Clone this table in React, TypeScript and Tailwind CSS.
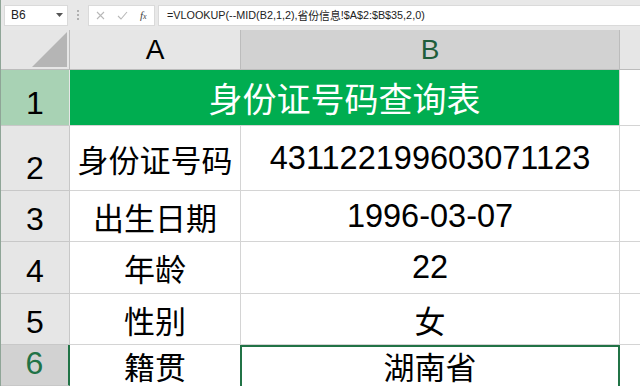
import React from "react";

const cjk = { fontFamily: '"Noto Sans CJK SC", "Liberation Sans", sans-serif' };
const lat = { fontFamily: '"Liberation Sans", "Noto Sans CJK SC", sans-serif' };

function RowHead({ n, active, green }: { n: number; active?: boolean; green?: boolean }) {
  return (
    <div
      className={
        "flex items-end justify-center pb-[6px] text-[32px] leading-none border-b " +
        (active
          ? "bg-[#d2d2d2] text-[#217346] border-[#c8c8c8] border-r-2 border-r-[#217346]"
          : green
          ? "bg-[#a8d2b4] text-black border-[#c8c8c8] border-r border-r-[#e6e6e6]"
          : "bg-[#e6e6e6] text-black border-[#c8c8c8] border-r border-r-[#c8c8c8]")
      }
      style={lat}
    >
      {n}
    </div>
  );
}

function Cell({ children, font = cjk, size = "text-[31px]" }: { children?: React.ReactNode; font?: React.CSSProperties; size?: string }) {
  return (
    <div className={"flex items-center justify-center bg-white border-r border-b border-[#d4d4d4] text-black leading-none " + size} style={font}>
      {children}
    </div>
  );
}

export default function App() {
  return (
    <div className="w-[640px] h-[386px] overflow-hidden bg-[#e8e8e8] flex flex-col border-l border-[#8fa597]">
      {/* formula bar */}
      <div className="h-[30px] flex items-center pl-[3px] shrink-0">
        <div className="w-[64px] h-[21px] bg-white border border-[#dadada] flex items-center justify-between pl-[6px] pr-[4px] text-[12px] text-[#222]" style={lat}>
          <span>B6</span>
          <svg width="7" height="4" viewBox="0 0 7 4"><path d="M0 0 L7 0 L3.5 4 Z" fill="#555" /></svg>
        </div>
        <div className="w-[20px] flex flex-col items-center gap-[2px]">
          <div className="w-[2px] h-[2px] bg-[#b0b0b0]" />
          <div className="w-[2px] h-[2px] bg-[#b0b0b0]" />
          <div className="w-[2px] h-[2px] bg-[#b0b0b0]" />
        </div>
        <div className="w-[67px] h-[21px] bg-white border border-[#dadada] flex items-center pl-[7px] gap-[12px]">
          <svg width="9" height="9" viewBox="0 0 9 9"><path d="M1 1 L8 8 M8 1 L1 8" stroke="#b8b8b8" strokeWidth="1.1" /></svg>
          <svg width="11" height="9" viewBox="0 0 11 9"><path d="M1 5 L4 8 L10 1" stroke="#b8b8b8" strokeWidth="1.1" fill="none" /></svg>
          <span className="text-[11px] italic text-[#444] leading-none" style={{ fontFamily: '"Liberation Serif", serif' }}>
            f<span className="text-[8px]">x</span>
          </span>
        </div>
        <div className="flex-1 h-[21px] ml-[3px] bg-white border border-[#dadada] border-r-0 flex items-center pl-[8px] text-[10.8px] text-[#222] whitespace-nowrap" style={lat}>
          =VLOOKUP(--MID(B2,1,2),<span style={cjk}>省份信息</span>!$A$2:$B$35,2,0)
        </div>
      </div>

      {/* grid */}
      <div className="flex-1 grid grid-cols-[69px_171px_379px_1fr] grid-rows-[40px_56px_65px_51px_52px_51px_1fr] bg-white">
        {/* header row */}
        <div className="bg-[#e6e6e6] border-r border-b border-[#bcbcbc] flex items-end justify-end pr-[2px] pb-[2px]">
          <svg width="35" height="35" viewBox="0 0 35 35"><path d="M35 0 L35 35 L0 35 Z" fill="#b5b5b5" /></svg>
        </div>
        <div className="bg-[#e6e6e6] border-r border-b border-[#bcbcbc] flex items-center justify-center text-[28px] text-black leading-none" style={lat}>A</div>
        <div className="bg-[#d2d2d2] border-r border-b border-[#bcbcbc] flex items-center justify-center text-[28px] text-[#1e5e3b] leading-none" style={lat}>B</div>
        <div className="bg-[#e6e6e6] border-b border-[#bcbcbc]" />

        {/* row 1 */}
        <RowHead n={1} green />
        <div className="col-span-2 bg-[#00ad50] border-r border-b border-[#d4d4d4] flex items-center justify-center text-white text-[34px] leading-none" style={cjk}>
          身份证号码查询表
        </div>
        <div className="bg-white border-b border-[#d4d4d4]" />

        {/* row 2 */}
        <RowHead n={2} />
        <Cell>身份证号码</Cell>
        <Cell font={lat} size="text-[32.5px]">431122199603071123</Cell>
        <div className="bg-white border-b border-[#d4d4d4]" />

        {/* row 3 */}
        <RowHead n={3} />
        <Cell>出生日期</Cell>
        <Cell font={lat} size="text-[32.5px]">1996-03-07</Cell>
        <div className="bg-white border-b border-[#d4d4d4]" />

        {/* row 4 */}
        <RowHead n={4} />
        <Cell>年龄</Cell>
        <Cell font={lat} size="text-[32.5px]">22</Cell>
        <div className="bg-white border-b border-[#d4d4d4]" />

        {/* row 5 */}
        <RowHead n={5} />
        <Cell>性别</Cell>
        <Cell>女</Cell>
        <div className="bg-white border-b border-[#d4d4d4]" />

        {/* row 6 */}
        <RowHead n={6} active />
        <div className="bg-white border-r border-[#d4d4d4] flex items-start justify-center pt-[5px] text-[31px] text-black leading-none" style={cjk}>籍贯</div>
        <div className="bg-white border-l-2 border-t-2 border-r-2 border-[#217346] -ml-[1px] flex items-start justify-center pt-[3px] text-[31px] text-black leading-none" style={cjk}>湖南省</div>
        <div className="bg-white" />
      </div>
    </div>
  );
}
